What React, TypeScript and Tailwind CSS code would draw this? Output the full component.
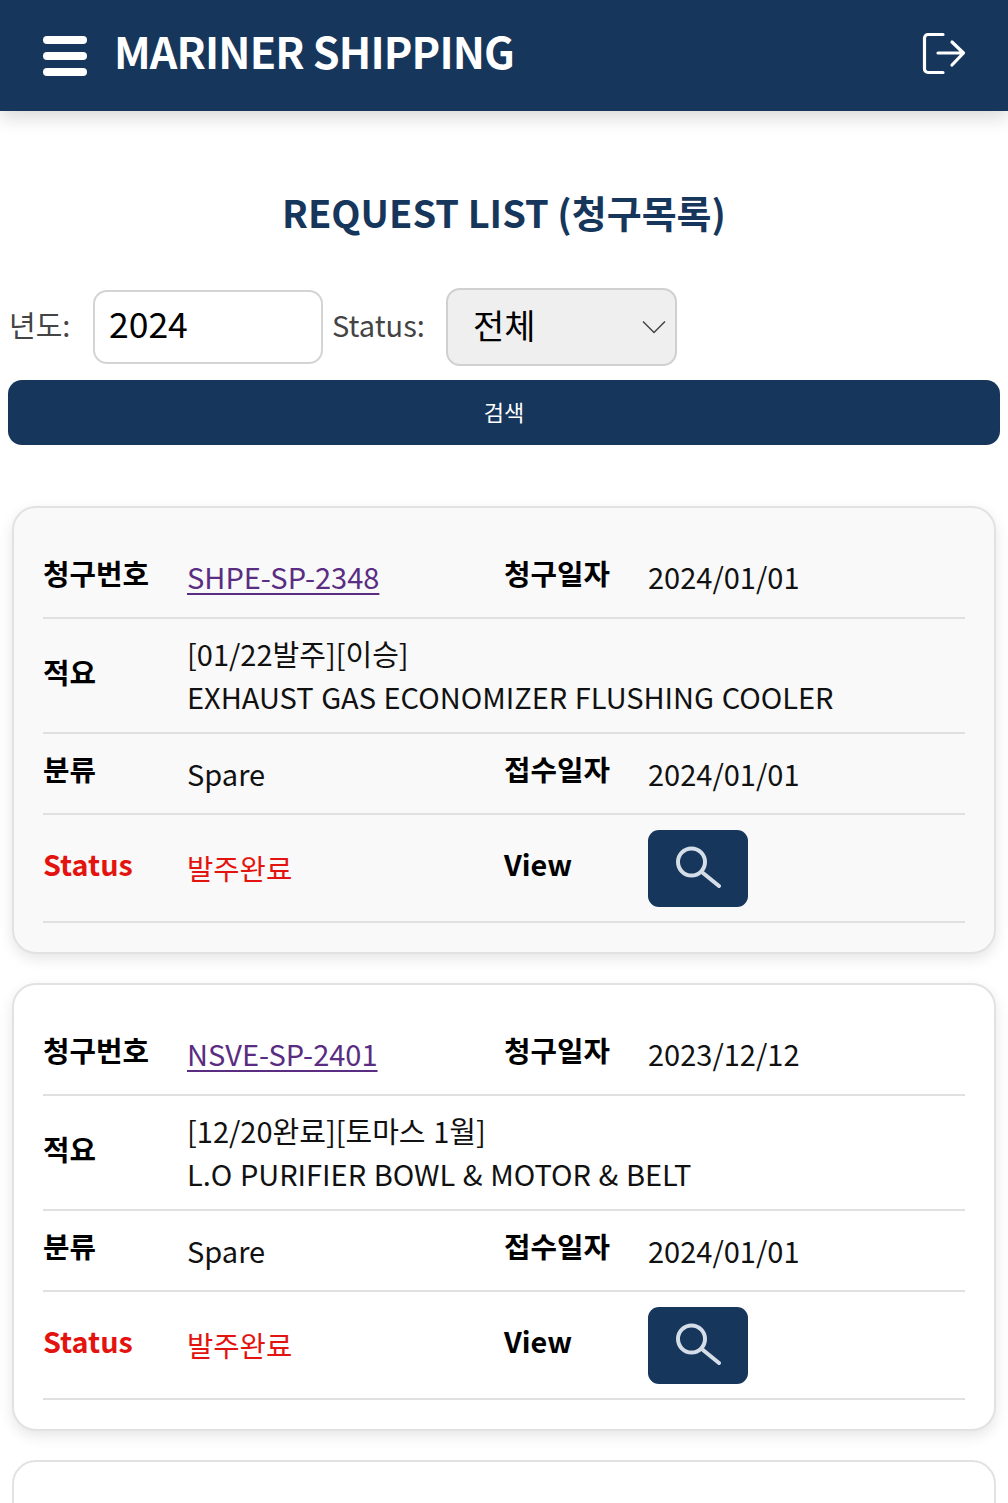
import React from 'react';

const KR = "font-['Noto_Sans_CJK_KR','Noto_Sans',sans-serif]";

type Req = {
    no: string;
    reqDate: string;
    memo: string;
    title: string;
    recvDate: string;
    bg: string;
};

const requests: Req[] = [
    { no: 'SHPE-SP-2348', reqDate: '2024/01/01', memo: '[01/22발주][이승]', title: 'EXHAUST GAS ECONOMIZER FLUSHING COOLER', recvDate: '2024/01/01', bg: 'bg-[#f9f9f9]' },
    { no: 'NSVE-SP-2401', reqDate: '2023/12/12', memo: '[12/20완료][토마스 1월]', title: 'L.O PURIFIER BOWL & MOTOR & BELT', recvDate: '2024/01/01', bg: 'bg-white' },
];

const Label = ({ children, className = '' }: { children: React.ReactNode; className?: string }) => (
    <div className={`text-[28.800px] leading-[40px] font-bold text-black ${className}`}>{children}</div>
);

const RequestCard = ({ r }: { r: Req }) => (
    <div className={`mx-[12px] mb-[29px] h-[448px] rounded-[24px] border-2 border-[#e2e2e2] px-[29px] pt-[30px] shadow-[0_5px_14px_rgba(0,0,0,0.1)] ${r.bg}`}>
        <div className="flex h-[81px] items-center border-b-2 border-[#e0e0e0]">
            <Label className="w-[144px] -mt-[9px]">청구번호</Label>
            <a className="-mt-[3px] w-[317px] text-[29px] leading-[40px] text-[#5a2d82] underline underline-offset-[4px]">{r.no}</a>
            <Label className="w-[144px] -mt-[9px]">청구일자</Label>
            <div className="-mt-[3px] text-[29px] leading-[40px] text-[#111]">{r.reqDate}</div>
        </div>
        <div className="flex h-[115px] items-center border-b-2 border-[#e0e0e0]">
            <Label className="w-[144px] -mt-[8px]">적요</Label>
            <div className="-mt-[1px] text-[29px] leading-[43px] text-[#111] [word-spacing:1.100px]">
                <div>{r.memo}</div>
                <div>{r.title}</div>
            </div>
        </div>
        <div className="flex h-[81px] items-center border-b-2 border-[#e0e0e0]">
            <Label className="w-[144px] -mt-[10px]">분류</Label>
            <div className="-mt-[2px] w-[317px] text-[29px] leading-[40px] text-[#111]">Spare</div>
            <Label className="w-[144px] -mt-[10px]">접수일자</Label>
            <div className="-mt-[2px] text-[29px] leading-[40px] text-[#111]">{r.recvDate}</div>
        </div>
        <div className="flex h-[108px] items-center border-b-2 border-[#e0e0e0]">
            <Label className="w-[144px] -mt-[8px] !text-[#e3140f]">Status</Label>
            <div className="w-[317px] text-[28.600px] leading-[40px] text-[#e3140f]">발주완료</div>
            <Label className="w-[144px] -mt-[8px]">View</Label>
            <button className="flex h-[77px] w-[100px] items-center justify-center rounded-[11px] bg-[#16365c]">
                <svg width="46" height="46" viewBox="0 0 46 46" fill="none" stroke="#d5dde8" strokeLinecap="round">
                    <circle cx="16.500" cy="17" r="13.500" strokeWidth="4" />
                    <path d="M28 28 L44 41" strokeWidth="4" />
                </svg>
            </button>
        </div>
    </div>
);

export default function App() {
    return (
        <div className={`h-[1503px] overflow-hidden bg-white ${KR}`}>
            <header className="flex h-[111px] items-center justify-between bg-[#16365c] pl-[43px] pr-[42px] shadow-[0_6px_18px_rgba(0,0,0,0.16)]">
                <div className="flex items-center gap-[27px]">
                    <div className="flex h-[40px] w-[44px] flex-col justify-between">
                        <span className="h-[8px] rounded-full bg-white" />
                        <span className="h-[8px] rounded-full bg-white" />
                        <span className="h-[8px] rounded-full bg-white" />
                    </div>
                    <h1 className="-mt-[12px] text-[43px] leading-[50px] font-bold tracking-[-0.850px] text-white">MARINER SHIPPING</h1>
                </div>
                <svg className="-mt-[3px]" width="44" height="44" viewBox="0 0 44 44" fill="none" stroke="white" strokeWidth="3.200" strokeLinecap="round" strokeLinejoin="round">
                    <path d="M21 2.500H6a3.500 3.500 0 0 0-3.500 3.500v31a3.500 3.500 0 0 0 3.500 3.500h15" />
                    <path d="M16 21h25M30 10l11.500 11L30 33" />
                </svg>
            </header>

            <h2 className="mt-[74px] text-center text-[38px] leading-[54px] font-bold text-[#16365c]">REQUEST LIST (청구목록)</h2>

            <div className="mt-[49px] flex items-center pl-[9px]">
                <span className="w-[84px] text-[29px] text-[#444] -mt-[4px]">년도:</span>
                <input readOnly value="2024" className="h-[74px] w-[230px] rounded-[14px] border-2 border-[#d4d4d4] bg-white px-[14px] pb-[10px] text-[35.500px] text-black" />
                <span className="ml-[9px] w-[114px] text-[29px] text-[#444] -mt-[4px]">Status:</span>
                <div className="flex h-[78px] w-[231px] items-center justify-between rounded-[14px] border-2 border-[#d0d0d0] bg-[#efefef] pl-[25px] pr-[9px]">
                    <span className="text-[34px] text-black -mt-[6px]">전체</span>
                    <svg width="24" height="14" viewBox="0 0 24 14" fill="none" stroke="#444" strokeWidth="1.500">
                        <path d="M1 1.500 L12 12.500 L23 1.500" />
                    </svg>
                </div>
            </div>

            <button className="mx-[8px] mt-[14px] block h-[65px] w-[992px] rounded-[14px] bg-[#16365c] pb-[3px] text-[22px] text-white">검색</button>

            <div className="mt-[61px]">
                {requests.map((r) => (
                    <RequestCard key={r.no} r={r} />
                ))}
                <div className="mx-[12px] h-[100px] rounded-[24px] border-2 border-[#e2e2e2] bg-white" />
            </div>
        </div>
    );
}
